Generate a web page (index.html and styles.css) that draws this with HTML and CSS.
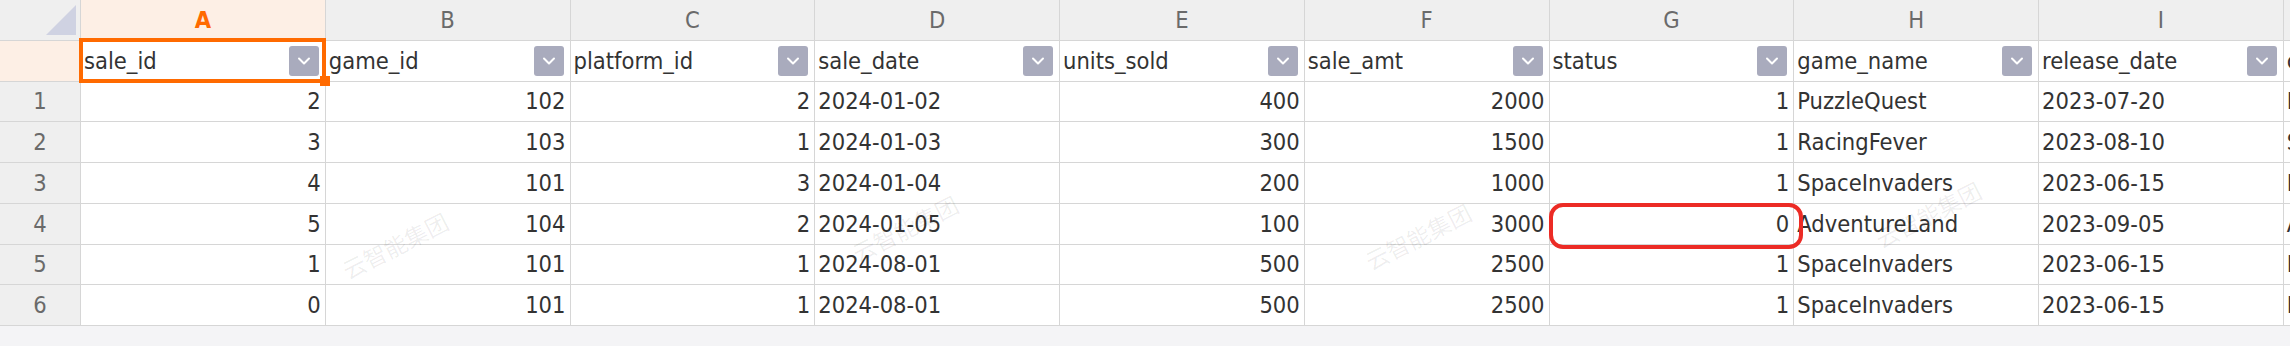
FILE: index.html
```html
<!DOCTYPE html>
<html lang="zh">
<head>
<meta charset="utf-8">
<title>Sheet</title>
<link rel="stylesheet" href="styles.css">
</head>
<body>
<div class="sheet">
  <div class="grid">
    <!-- column header row -->
    <div class="c corner"><span class="tri"></span></div>
    <div class="c colh active">A</div>
    <div class="c colh">B</div>
    <div class="c colh">C</div>
    <div class="c colh">D</div>
    <div class="c colh">E</div>
    <div class="c colh">F</div>
    <div class="c colh">G</div>
    <div class="c colh">H</div>
    <div class="c colh">I</div>
    <div class="c colh">J</div>

    <!-- filter row -->
    <div class="c rowh active"></div>
    <div class="c flt sel"><span>sale_id</span><i class="dd"><svg viewBox="0 0 30 30"><polyline points="10,12.5 15,17.5 20,12.5"/></svg></i><b class="handle"></b></div>
    <div class="c flt"><span>game_id</span><i class="dd"><svg viewBox="0 0 30 30"><polyline points="10,12.5 15,17.5 20,12.5"/></svg></i></div>
    <div class="c flt"><span>platform_id</span><i class="dd"><svg viewBox="0 0 30 30"><polyline points="10,12.5 15,17.5 20,12.5"/></svg></i></div>
    <div class="c flt"><span>sale_date</span><i class="dd"><svg viewBox="0 0 30 30"><polyline points="10,12.5 15,17.5 20,12.5"/></svg></i></div>
    <div class="c flt"><span>units_sold</span><i class="dd"><svg viewBox="0 0 30 30"><polyline points="10,12.5 15,17.5 20,12.5"/></svg></i></div>
    <div class="c flt"><span>sale_amt</span><i class="dd"><svg viewBox="0 0 30 30"><polyline points="10,12.5 15,17.5 20,12.5"/></svg></i></div>
    <div class="c flt"><span>status</span><i class="dd"><svg viewBox="0 0 30 30"><polyline points="10,12.5 15,17.5 20,12.5"/></svg></i></div>
    <div class="c flt"><span>game_name</span><i class="dd"><svg viewBox="0 0 30 30"><polyline points="10,12.5 15,17.5 20,12.5"/></svg></i></div>
    <div class="c flt"><span>release_date</span><i class="dd"><svg viewBox="0 0 30 30"><polyline points="10,12.5 15,17.5 20,12.5"/></svg></i></div>
    <div class="c flt"><span>category</span><i class="dd"><svg viewBox="0 0 30 30"><polyline points="10,12.5 15,17.5 20,12.5"/></svg></i></div>

    <!-- row 1 -->
    <div class="c rowh">1</div>
    <div class="c n">2</div><div class="c n">102</div><div class="c n">2</div><div class="c t">2024-01-02</div><div class="c n">400</div><div class="c n">2000</div><div class="c n">1</div><div class="c t">PuzzleQuest</div><div class="c t">2023-07-20</div><div class="c t">Puzzle</div>
    <!-- row 2 -->
    <div class="c rowh">2</div>
    <div class="c n">3</div><div class="c n">103</div><div class="c n">1</div><div class="c t">2024-01-03</div><div class="c n">300</div><div class="c n">1500</div><div class="c n">1</div><div class="c t">RacingFever</div><div class="c t">2023-08-10</div><div class="c t">Sports</div>
    <!-- row 3 -->
    <div class="c rowh">3</div>
    <div class="c n">4</div><div class="c n">101</div><div class="c n">3</div><div class="c t">2024-01-04</div><div class="c n">200</div><div class="c n">1000</div><div class="c n">1</div><div class="c t">SpaceInvaders</div><div class="c t">2023-06-15</div><div class="c t">Platform</div>
    <!-- row 4 -->
    <div class="c rowh">4</div>
    <div class="c n">5</div><div class="c n">104</div><div class="c n">2</div><div class="c t">2024-01-05</div><div class="c n">100</div><div class="c n">3000</div><div class="c n mark">0</div><div class="c t">AdventureLand</div><div class="c t">2023-09-05</div><div class="c t">Adventure</div>
    <!-- row 5 -->
    <div class="c rowh">5</div>
    <div class="c n">1</div><div class="c n">101</div><div class="c n">1</div><div class="c t">2024-08-01</div><div class="c n">500</div><div class="c n">2500</div><div class="c n">1</div><div class="c t">SpaceInvaders</div><div class="c t">2023-06-15</div><div class="c t">Platform</div>
    <!-- row 6 -->
    <div class="c rowh">6</div>
    <div class="c n">0</div><div class="c n">101</div><div class="c n">1</div><div class="c t">2024-08-01</div><div class="c n">500</div><div class="c n">2500</div><div class="c n">1</div><div class="c t">SpaceInvaders</div><div class="c t">2023-06-15</div><div class="c t">Platform</div>
  </div>

  <span class="wm wm1">云智能集团</span>
  <span class="wm wm2">云智能集团</span>
  <span class="wm wm3">云智能集团</span>
  <span class="wm wm4">云智能集团</span>
</div>
</body>
</html>
```

FILE: styles.css
```css
html, body {
  margin: 0;
  padding: 0;
  background: #f4f4f6;
}

.sheet {
  position: relative;
  width: 2290px;
  height: 346px;
  overflow: hidden;
  font-family: "DejaVu Sans Condensed", "DejaVu Sans", sans-serif;
  font-stretch: condensed;
  font-size: 23.5px;
  color: #333333;
}

.grid {
  display: grid;
  grid-template-columns: 81px repeat(10, 244.75px);
  grid-template-rows: repeat(8, 40.75px);
  width: max-content;
  background: #ffffff;
}

.c {
  box-sizing: border-box;
  border-right: 1px solid #d6d6d6;
  border-bottom: 1px solid #d6d6d6;
  white-space: nowrap;
  overflow: hidden;
  display: flex;
  align-items: center;
  background: #ffffff;
}

.corner {
  background: #efefef;
  position: relative;
}
.tri {
  position: absolute;
  left: 46px;
  top: 5px;
  width: 0;
  height: 0;
  border-left: 30px solid transparent;
  border-bottom: 30px solid #cfd2e2;
}

.colh {
  background: #efefef;
  justify-content: center;
  color: #6a6a6a;
}
.colh.active {
  background: #fdefe5;
  color: #ff6a00;
  font-weight: bold;
}

.rowh {
  background: #efefef;
  justify-content: center;
  color: #6a6a6a;
}
.rowh.active {
  background: #fdefe5;
}

.flt {
  justify-content: space-between;
  padding-left: 3px;
  padding-right: 6px;
}
.flt span {
  overflow: hidden;
}

.dd {
  flex: none;
  width: 30px;
  height: 30px;
  border-radius: 3px;
  background: #a9abbd;
  display: block;
}
.dd svg {
  display: block;
  width: 30px;
  height: 30px;
}
.dd polyline {
  fill: none;
  stroke: #ffffff;
  stroke-width: 2;
  stroke-linecap: round;
  stroke-linejoin: round;
}

.n {
  justify-content: flex-end;
  padding-right: 4px;
}
.t {
  justify-content: flex-start;
  padding-left: 3px;
}

/* selected cell */
.sel {
  position: relative;
  overflow: visible;
  z-index: 2;
}
.sel::after {
  content: "";
  position: absolute;
  left: -2px;
  top: -2.5px;
  right: -1.5px;
  bottom: -2px;
  border: 4px solid #ff6a00;
  pointer-events: none;
}
.handle {
  position: absolute;
  right: -5px;
  bottom: -5.5px;
  width: 10px;
  height: 10px;
  background: #ff6a00;
  z-index: 3;
}

/* red annotation */
.mark {
  position: relative;
  overflow: visible;
  z-index: 2;
}
.mark::after {
  content: "";
  position: absolute;
  left: -1px;
  top: -1px;
  right: -10px;
  bottom: -5px;
  border: 4.5px solid #ec2b25;
  border-radius: 14px;
  pointer-events: none;
}

/* watermark */
.wm {
  position: absolute;
  font-family: "Noto Sans CJK SC", sans-serif;
  font-size: 23px;
  color: rgba(0, 0, 0, 0.07);
  transform: translate(-50%, -50%) rotate(-27deg);
  white-space: nowrap;
  pointer-events: none;
  z-index: 4;
}
.wm1 { left: 395px; top: 245px; }
.wm2 { left: 905px; top: 228px; }
.wm3 { left: 1418px; top: 236px; }
.wm4 { left: 1928px; top: 214px; }
```
